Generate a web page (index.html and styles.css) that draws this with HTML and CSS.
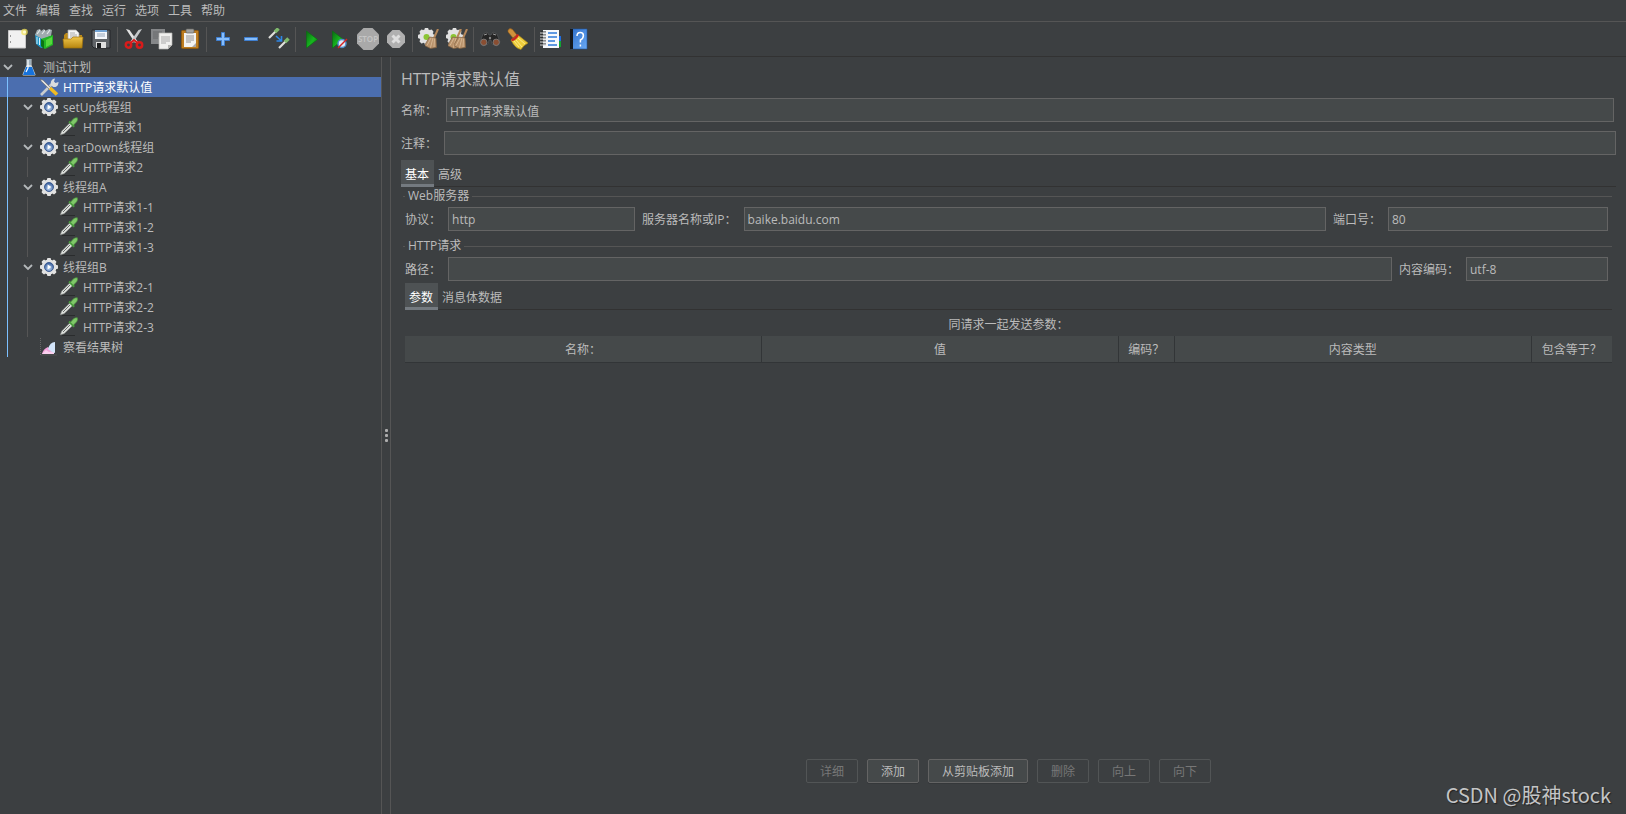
FILE: index.html
```html
<!DOCTYPE html>
<html lang="zh-CN">
<head>
<meta charset="utf-8">
<title>测试计划</title>
<link rel="stylesheet" href="styles.css">
</head>
<body>
<svg class="defs" aria-hidden="true">
  <defs>
    <linearGradient id="gGold" x1="0" y1="0" x2="0" y2="1"><stop offset="0" stop-color="#f0c64a"/><stop offset="1" stop-color="#b8860f"/></linearGradient>
    <linearGradient id="gGreen" x1="0" y1="0" x2="1" y2="1"><stop offset="0" stop-color="#0a6a12"/><stop offset=".55" stop-color="#17b51f"/><stop offset="1" stop-color="#0a7a10"/></linearGradient>
    <linearGradient id="gBook" x1="0" y1="0" x2="1" y2="1"><stop offset="0" stop-color="#2f6fca"/><stop offset="1" stop-color="#6aaaf5"/></linearGradient>
    <radialGradient id="gBall" cx=".5" cy=".65" r=".6"><stop offset="0" stop-color="#b9d4f4"/><stop offset="1" stop-color="#3a5f9c"/></radialGradient>
    <symbol id="gear" viewBox="0 0 20 20">
      <g fill="#e2e2e2"><rect x="8" y="1" width="4" height="18" rx="1"/><rect x="1" y="8" width="18" height="4" rx="1"/><rect x="8" y="1" width="4" height="18" rx="1" transform="rotate(45 10 10)"/><rect x="8" y="1" width="4" height="18" rx="1" transform="rotate(-45 10 10)"/><circle cx="10" cy="10" r="7.600"/></g>
    </symbol>
    <symbol id="group" viewBox="0 0 20 20">
      <use href="#gear"/><circle cx="10" cy="10" r="4.500" fill="url(#gBall)" stroke="#35558c" stroke-width=".9"/><path d="M8.600 7.600v4.800l3.800-2.400z" fill="#fff"/>
    </symbol>
    <symbol id="dropper" viewBox="0 0 20 20">
      <path d="M3 18.500h13" stroke="#2a2c2d" stroke-width="1"/>
      <path d="M1.300 17.700l1.500-3.700 8.500-8.500 2.700 2.700-9 8.500z" fill="#dfe2df" stroke="#8b8f8b" stroke-width=".6"/>
      <path d="M4 15l7-7" stroke="#5d605d" stroke-width=".9"/>
      <path d="M10 4.500l5.200 5.200" stroke="#4a9a3e" stroke-width="2"/>
      <path d="M11.500 5.300l3-3.500q1.700-1.300 3.800-1 .7 2-.6 3.900l-3.400 3.600z" fill="#7fc768" stroke="#4a9a3e" stroke-width=".7"/>
    </symbol>
    <symbol id="chev" viewBox="0 0 12 12"><path d="M2 4l4 4 4-4" fill="none" stroke="#b4b8ba" stroke-width="1.800"/></symbol>
    <symbol id="broom" viewBox="0 0 14 20"><path d="M13 0l-4 9" stroke="#b4875a" stroke-width="2"/><path d="M4.500 8l6.500 1 .5 9.500-6 1-6-3z" fill="#b8916a" stroke="#80603f" stroke-width=".7"/><path d="M6 9l-4 7.500M8 9l-2.500 9.500M9.500 9.500l-.5 8.500" stroke="#e3c4a0" stroke-width=".7"/></symbol>
  </defs>
</svg>

<nav class="menubar">
  <button>文件</button><button>编辑</button><button>查找</button><button>运行</button><button>选项</button><button>工具</button><button>帮助</button>
</nav>

<div class="toolbar" role="toolbar">
  <button aria-label="新建"><svg viewBox="0 0 22 22"><path d="M2.500 2.500h17v17.500h-17z" fill="#f1f1f1" stroke="#c7c7c7"/><path d="M4.500 7v2M4.500 13v2" stroke="#999"/><circle cx="18.500" cy="4" r="3.300" fill="#f3e45c" opacity=".75"/><circle cx="18.500" cy="4" r="1.600" fill="#fffbd0"/></svg></button>
  <button aria-label="模板"><svg viewBox="0 0 22 22"><path d="M1 6l8-2 5 3v12l-7 1-5-4z" fill="#1d95c8"/><path d="M1 7l2-5 3-1 1 2 3-2 1 2 4-2 3 1-1 6-9 3z" fill="#9fabaf"/><path d="M3 6l3-4M8 6l3-4M13 6l3-4" stroke="#e4e9ea" stroke-width="1.200"/><path d="M3 9v7M5.500 10v7" stroke="#d6f0fa"/><path d="M7 11l6-2 6-2v10l-8 4-4-3z" fill="#22b524"/><path d="M7 11l3 2v8l-3-3z" fill="#0b7512"/><path d="M12 12l6-3v7l-6 3z" fill="#55d83c"/></svg></button>
  <button aria-label="打开"><svg viewBox="0 0 22 22"><path d="M2 7l2-2h4l1 2h11v10H2z" fill="#bd8b18"/><path d="M6 2h8l3 3v8H6z" fill="#f5f5f5" stroke="#aaa" stroke-width=".7"/><path d="M8 5h5M8 7h7M8 9h7" stroke="#999" stroke-width=".8"/><path d="M1 11h8l2-2h10l-1 11H2z" fill="url(#gGold)" stroke="#a2730c" stroke-width=".7"/></svg></button>
  <button aria-label="保存"><svg viewBox="0 0 22 22"><path d="M2 2h18v18H4l-2-2z" fill="#606468" stroke="#24272a"/><path d="M5 2h12v9H5z" fill="#f4f7fb"/><path d="M5 2h12v2H5z" fill="#72a3d4"/><path d="M7 6h8M7 8h8" stroke="#94a5b9"/><path d="M6 14h10v6H6z" fill="#e0e0e0"/><path d="M7 15h4v5H7z" fill="#1c1e20"/></svg></button>
  <i class="sep"></i>
  <button aria-label="剪切"><svg viewBox="0 0 22 22"><path d="M3 1l3.500 1 8.500 12-3 1z" fill="#e3e3e3"/><path d="M19 1l-3.500 1L7 14l3 1z" fill="#c6c9cb"/><g fill="none" stroke="#d81b1b" stroke-width="2.500"><circle cx="5.500" cy="17" r="2.700"/><circle cx="16.500" cy="17" r="2.700"/></g><path d="M7.500 15l3.500-3 3.500 3" fill="none" stroke="#d81b1b" stroke-width="2"/></svg></button>
  <button aria-label="复制"><svg viewBox="0 0 22 22"><path d="M0 1h14v15H0z" fill="#858789"/><path d="M2 4h9M2 6h9M2 8h9M2 10h5" stroke="#66696b"/><path d="M8 5h13v12l-4 4H8z" fill="#f0f0ee" stroke="#b5b5b2" stroke-width=".7"/><path d="M10 9h9M10 11h9M10 13h9M10 15h5" stroke="#aaa"/><path d="M17 21v-4h4z" fill="#b5b5b2"/></svg></button>
  <button aria-label="粘贴"><svg viewBox="0 0 22 22"><rect x="2.500" y="2.500" width="17" height="18" rx="1" fill="#bd7d20" stroke="#8b5911"/><path d="M5 5h12v14H5z" fill="#f3f3f1"/><rect x="7" y="1" width="8" height="4" rx="1" fill="#a3a3a0" stroke="#62625f" stroke-width=".7"/><path d="M7 8h8M7 10h8M7 12h8M7 14h5" stroke="#929292"/><path d="M13 19l4-4v4z" fill="#a8a8a8"/></svg></button>
  <i class="sep"></i>
  <button aria-label="展开"><svg viewBox="0 0 22 22"><path d="M9.500 4.500h3v5h5v3h-5v5h-3v-5h-5v-3h5z" fill="#86bdfb" stroke="#3f7fd0"/></svg></button>
  <button aria-label="折叠"><svg viewBox="0 0 22 22"><path d="M4.500 9.500h13v3h-13z" fill="#86bdfb" stroke="#3f7fd0"/></svg></button>
  <button aria-label="切换"><svg viewBox="0 0 22 22"><path d="M1 10l7-7" stroke="#e0e0dc" stroke-width="2.200"/><path d="M7 4l3.500-3.500" stroke="#7fb96c" stroke-width="3.600"/><path d="M11 20l7-7" stroke="#e0e0dc" stroke-width="2.200"/><path d="M17 14l3.500-3.500" stroke="#7fb96c" stroke-width="3.600"/><path d="M8 8l5 4.500M13.500 8v5h-5" fill="none" stroke="#2e87e6" stroke-width="1.600"/></svg></button>
  <i class="sep"></i>
  <button aria-label="启动"><svg viewBox="0 0 22 22"><path d="M5.500 3v17l11-8.500z" fill="url(#gGreen)" stroke="#0b6e12" stroke-width=".7"/></svg></button>
  <button aria-label="不停顿开始"><svg viewBox="0 0 22 22"><path d="M3.500 3v17l11-8.500z" fill="url(#gGreen)" stroke="#0b6e12" stroke-width=".7"/><circle cx="13" cy="15.500" r="4" fill="#dfeaf6" stroke="#4f8fca" stroke-width="1.500"/><path d="M9 20l9-9" stroke="#d62222" stroke-width="1.400"/></svg></button>
  <button aria-label="停止" disabled><svg viewBox="0 0 22 22"><path d="M6.500 0h9L22 6.500v9L15.500 22h-9L0 15.500v-9z" fill="#a9a9a9"/><text x="11" y="14" class="stop-word">STOP</text></svg></button>
  <button aria-label="关闭" disabled><svg viewBox="0 0 22 22"><path d="M7.500 2h7L20 7.500v7L14.500 20h-7L2 14.500v-7z" fill="#b0b0b0"/><path d="M7.500 7.500l7 7M14.500 7.500l-7 7" stroke="#dedede" stroke-width="3"/></svg></button>
  <i class="sep"></i>
  <button aria-label="清除"><svg viewBox="0 0 22 22"><use href="#gear" x="-1" y="-1" width="19" height="19"/><circle cx="8.500" cy="9" r="3" fill="#8bc534"/><use href="#broom" x="7" y="1" width="14" height="20"/></svg></button>
  <button aria-label="清除全部"><svg viewBox="0 0 22 22"><use href="#gear" x="-1" y="-1" width="19" height="19"/><circle cx="7.500" cy="9" r="3" fill="#8bc534"/><use href="#broom" x="2" y="1" width="14" height="20"/><use href="#broom" x="8" y="1" width="14" height="20"/></svg></button>
  <i class="sep"></i>
  <button aria-label="搜索"><svg viewBox="0 0 22 22"><path d="M4 6l4-2 2 3h2l2-3 4 2 3 8-3 4-5-2-1-4h-2l-1 4-5 2-3-4z" fill="#252525" stroke="#55585a" stroke-width=".7"/><path d="M5 7l3-1M14 6l3 1" stroke="#999"/><circle cx="4.800" cy="14.300" r="3.200" fill="#8a4e32" stroke="#777"/><circle cx="17.200" cy="14.300" r="3.200" fill="#8a4e32" stroke="#777"/><circle cx="11" cy="10" r="1.200" fill="#888"/></svg></button>
  <button aria-label="重置搜索"><svg viewBox="0 0 22 22"><path d="M1 2q2-2.500 4.500-.5L10 7l-4 3-5-6z" fill="#d0913c" stroke="#8b571a" stroke-width=".6"/><path d="M11 7l10 8q-4 2-7 6.500-6-1-10-9.500z" fill="#edcc3a" stroke="#a8871a" stroke-width=".7"/><path d="M9 12l6 7M11 10l7 6M7 13l5 6" stroke="#fff09a" stroke-width=".8"/><path d="M4.500 12q4.500-1 6.500-5.500" fill="none" stroke="#c92520" stroke-width="2.500"/></svg></button>
  <i class="sep"></i>
  <button aria-label="函数助手"><svg viewBox="0 0 22 22"><path d="M18 8h3v5h-3z" fill="#1e6de0"/><path d="M18 13h3v6h-3z" fill="#12a334"/><path d="M3 2h16v18H3z" fill="#f6f8fc"/><path d="M8 5h9M8 9h9M8 13h7M8 17h9" stroke="#2e78d8" stroke-width="1.300"/><path d="M1 4h5M1 7h5M1 10h5M1 13h5M1 16h5" stroke="#25282b" stroke-width="1.200"/><path d="M0 5h6M0 8h6M0 11h6M0 14h6M0 17h6" stroke="#d6d6d6"/></svg></button>
  <button aria-label="帮助"><svg viewBox="0 0 22 22"><path d="M3 1h16v20H3z" fill="url(#gBook)" stroke="#1e559f" stroke-width=".6"/><path d="M2 1h3v20H2z" fill="#15191e"/><path d="M9 8q0-3.500 3.200-3.500t3.200 3-3 4.500v2.500M12.400 16.500v2" fill="none" stroke="#fff" stroke-width="1.500"/></svg></button>
</div>

<div class="workspace">
  <aside class="side">
    <ul class="tree">
      <li class="row"><svg class="chev"><use href="#chev"/></svg><svg class="icon" viewBox="0 0 20 20"><path d="M7.500 2h5v6l4 9.500q0 1-1 1h-11q-1 0-1-1l4-9.500z" fill="#cfd8de" /><path d="M7 10h6l3 8H4z" fill="#1672dc"/><path d="M8 2h4v6H8z" fill="#9fb0bb"/><path d="M9 3v8l-2 4" stroke="#fff" fill="none" stroke-width="1.200"/></svg><span>测试计划</span></li>
      <li>
        <ul class="branch root">
          <li class="row selected"><svg class="icon" viewBox="0 0 20 20"><path d="M2 18L13 7" stroke="#c8ccce" stroke-width="2.600"/><path d="M12 8q-1-4 2-6l2-.5-1 3 1.500 1.500 3-1q0 4-3 5-2 .3-3-.5z" fill="#d9dcde"/><path d="M1 2l3 1 8 8-1.500 1.500-8-8z" fill="#dcdcdc" stroke="#555" stroke-width=".5"/><path d="M11 11l7 6.500" stroke="#f0bc22" stroke-width="3.600"/></svg><span>HTTP请求默认值</span></li>
          <li class="row"><svg class="chev"><use href="#chev"/></svg><svg class="icon"><use href="#group"/></svg><span>setUp线程组</span></li>
          <li><ul class="branch"><li class="row"><svg class="icon"><use href="#dropper"/></svg><span>HTTP请求1</span></li></ul></li>
          <li class="row"><svg class="chev"><use href="#chev"/></svg><svg class="icon"><use href="#group"/></svg><span>tearDown线程组</span></li>
          <li><ul class="branch"><li class="row"><svg class="icon"><use href="#dropper"/></svg><span>HTTP请求2</span></li></ul></li>
          <li class="row"><svg class="chev"><use href="#chev"/></svg><svg class="icon"><use href="#group"/></svg><span>线程组A</span></li>
          <li><ul class="branch"><li class="row"><svg class="icon"><use href="#dropper"/></svg><span>HTTP请求1-1</span></li><li class="row"><svg class="icon"><use href="#dropper"/></svg><span>HTTP请求1-2</span></li><li class="row"><svg class="icon"><use href="#dropper"/></svg><span>HTTP请求1-3</span></li></ul></li>
          <li class="row"><svg class="chev"><use href="#chev"/></svg><svg class="icon"><use href="#group"/></svg><span>线程组B</span></li>
          <li><ul class="branch"><li class="row"><svg class="icon"><use href="#dropper"/></svg><span>HTTP请求2-1</span></li><li class="row"><svg class="icon"><use href="#dropper"/></svg><span>HTTP请求2-2</span></li><li class="row"><svg class="icon"><use href="#dropper"/></svg><span>HTTP请求2-3</span></li></ul></li>
          <li class="row"><svg class="icon" viewBox="0 0 20 20"><path d="M1.500 1v17H18" fill="none" stroke="#666" stroke-dasharray="1 1"/><path d="M3 17q1-5 6-7l6 7z" fill="#f4a3dc"/><path d="M3 17l4-4 3 2 5-1v3z" fill="#fbd0ef"/><path d="M9 12q2-7 7-7v11l-3-1z" fill="#d3e5fb"/></svg><span>察看结果树</span></li>
        </ul>
      </li>
    </ul>
  </aside>
  <div class="splitter"><i></i><i></i><i></i></div>
  <main class="panel">
    <h1>HTTP请求默认值</h1>
    <div class="field-row name-row"><label for="name">名称：</label><input id="name" type="text" value="HTTP请求默认值"></div>
    <div class="field-row comment-row"><label for="comment">注释：</label><input id="comment" type="text"></div>
    <div class="tabs" role="tablist"><button role="tab" aria-selected="true">基本</button><button role="tab" aria-selected="false">高级</button></div>
    <div class="tab-body">
      <section class="group">
        <h2>Web服务器</h2>
        <div class="line">
          <label for="protocol">协议：</label><input id="protocol" class="w-protocol" type="text" value="http">
          <label for="server">服务器名称或IP：</label><input id="server" class="grow" type="text" value="baike.baidu.com">
          <label for="port">端口号：</label><input id="port" class="w-port" type="text" value="80">
        </div>
      </section>
      <section class="group">
        <h2>HTTP请求</h2>
        <div class="line">
          <label for="path">路径：</label><input id="path" class="grow" type="text">
          <label for="encoding">内容编码：</label><input id="encoding" class="w-encoding" type="text" value="utf-8">
        </div>
      </section>
      <div class="params">
        <div class="tabs" role="tablist"><button role="tab" aria-selected="true">参数</button><button role="tab" aria-selected="false">消息体数据</button></div>
        <table>
          <caption>同请求一起发送参数：</caption>
          <colgroup><col><col><col class="c-encode"><col><col class="c-equals"></colgroup>
          <thead><tr><th>名称：</th><th>值</th><th>编码？</th><th>内容类型</th><th>包含等于？</th></tr></thead>
        </table>
        <div class="actions">
          <button disabled>详细</button><button>添加</button><button>从剪贴板添加</button><button disabled>删除</button><button disabled>向上</button><button disabled>向下</button>
        </div>
      </div>
    </div>
    <div class="watermark">CSDN @股神stock</div>
  </main>
</div>
</body>
</html>
```
FILE: styles.css
```css
* { box-sizing: border-box; }

body {
  margin: 0;
  min-height: 100vh;
  display: flex;
  flex-direction: column;
  background: #3c3f41;
  color: #bbbbbb;
  font: 12px/20px "Open Sans", "Noto Sans CJK SC", sans-serif;
}

button, input { font: inherit; color: inherit; }
button { padding: 0; border: 0; background: none; }
ul { margin: 0; padding: 0; list-style: none; }
.defs { position: absolute; width: 0; height: 0; }

.menubar {
  display: flex;
  gap: 9px;
  height: 22px;
  padding: 1px 3px 0;
  border-bottom: 1px solid #555555;
}

.toolbar {
  display: flex;
  align-items: center;
  gap: 6px;
  height: 35px;
  padding: 0 6px;
  border-bottom: 1px solid #323232;
}
.toolbar button { width: 22px; height: 22px; }
.toolbar svg { display: block; width: 22px; height: 22px; }
.sep { width: 1px; height: 25px; margin: 0 -1px; background: #555555; }
.stop-word { font-size: 8px; font-weight: 600; fill: #c6c6c6; text-anchor: middle; }

.workspace { flex: 1; display: flex; }
.side { width: 382px; border-right: 1px solid #555555; }

.row { display: flex; align-items: center; height: 20px; padding-left: 19px; white-space: nowrap; }
.row span { padding: 2px 0 0 4px; }
.chev { width: 12px; height: 12px; margin-left: -17px; margin-right: 5px; }
.icon { width: 20px; height: 20px; }
.branch { position: relative; padding-left: 20px; }
.branch::before { content: ""; position: absolute; left: 7px; top: 0; bottom: 0; width: 1px; background: #555555; }
.branch.root::before { background: #7cc0ff; }
.branch .selected { margin-left: -20px; padding-left: 39px; background: #4b6eaf; color: #ffffff; }

.splitter {
  width: 9px;
  border-right: 1px solid #555555;
  display: flex;
  flex-direction: column;
  align-items: center;
  justify-content: center;
  gap: 2px;
}
.splitter i { width: 3px; height: 3px; border-radius: 1px; background: #adadad; }

.panel { position: relative; flex: 1; display: flex; flex-direction: column; min-width: 0; padding: 10px 10px 0; }
h1 { margin: 0 0 7px; font-size: 16px; line-height: 24px; font-weight: 400; }

label { padding-top: 2px; }
input {
  height: 24px;
  min-width: 0;
  padding: 1px 3px 0;
  border: 1px solid #646464;
  border-radius: 0;
  background: #45494a;
  outline: 0;
}
.field-row { display: flex; align-items: center; }
.field-row input { flex: 1; }
.name-row { margin-bottom: 9px; padding-right: 2px; }
.name-row label { width: 45px; }
.comment-row { margin-bottom: 5px; }
.comment-row label { width: 43px; }

.tabs { display: flex; height: 27px; box-shadow: inset 0 -1px #323232; }
.tabs button { padding: 2px 5px 0 4px; height: 27px; }
.tabs [aria-selected="true"] { background: #4e5254; color: #ffffff; border-bottom: 3px solid #747a80; padding-top: 5px; }

.tab-body { flex: 1; display: flex; flex-direction: column; padding: 0 3px 0 4px; margin-right: 1px; }
.group { height: 50px; }
h2 { display: flex; align-items: center; gap: 3px; margin: 0 0 2px -2px; font-size: 12px; line-height: 18px; font-weight: 400; }
h2::before, h2::after { content: ""; height: 1px; background: #555555; }
h2::before { width: 2px; }
h2::after { flex: 1; }
.line { display: flex; align-items: center; gap: 7px; padding-right: 4px; white-space: nowrap; }
.line .grow { flex: 1; }
.w-protocol { width: 187px; }
.w-port { width: 220px; }
.w-encoding { width: 142px; }

.params { flex: 1; display: flex; flex-direction: column; margin-top: -4px; }
table { width: 100%; table-layout: fixed; border-collapse: collapse; }
caption { height: 26px; line-height: 30px; }
th { height: 26px; padding: 2px 0 0; font-weight: 400; background: #45494a; border-right: 1px solid #323537; border-bottom: 1px solid #323537; }
th:last-child { border-right: 0; }
.c-encode { width: 56px; }
.c-equals { width: 81px; }
.actions { display: flex; justify-content: center; gap: 9px; margin-top: auto; padding-bottom: 31px; }
.actions button { height: 24px; padding: 2px 13px 0; border: 1px solid #646464; border-radius: 2px; background: #45494a; box-shadow: 0 1px #35383a; }
.actions button:disabled { border-color: #525556; background: none; color: #777777; box-shadow: none; }

.watermark {
  position: absolute;
  right: 15px;
  bottom: 5px;
  font-family: "Noto Sans CJK SC", sans-serif;
  font-size: 20px;
  line-height: 28px;
  color: #c4c5c6;
  text-shadow: 1px 1px 1px #222222;
}
```
